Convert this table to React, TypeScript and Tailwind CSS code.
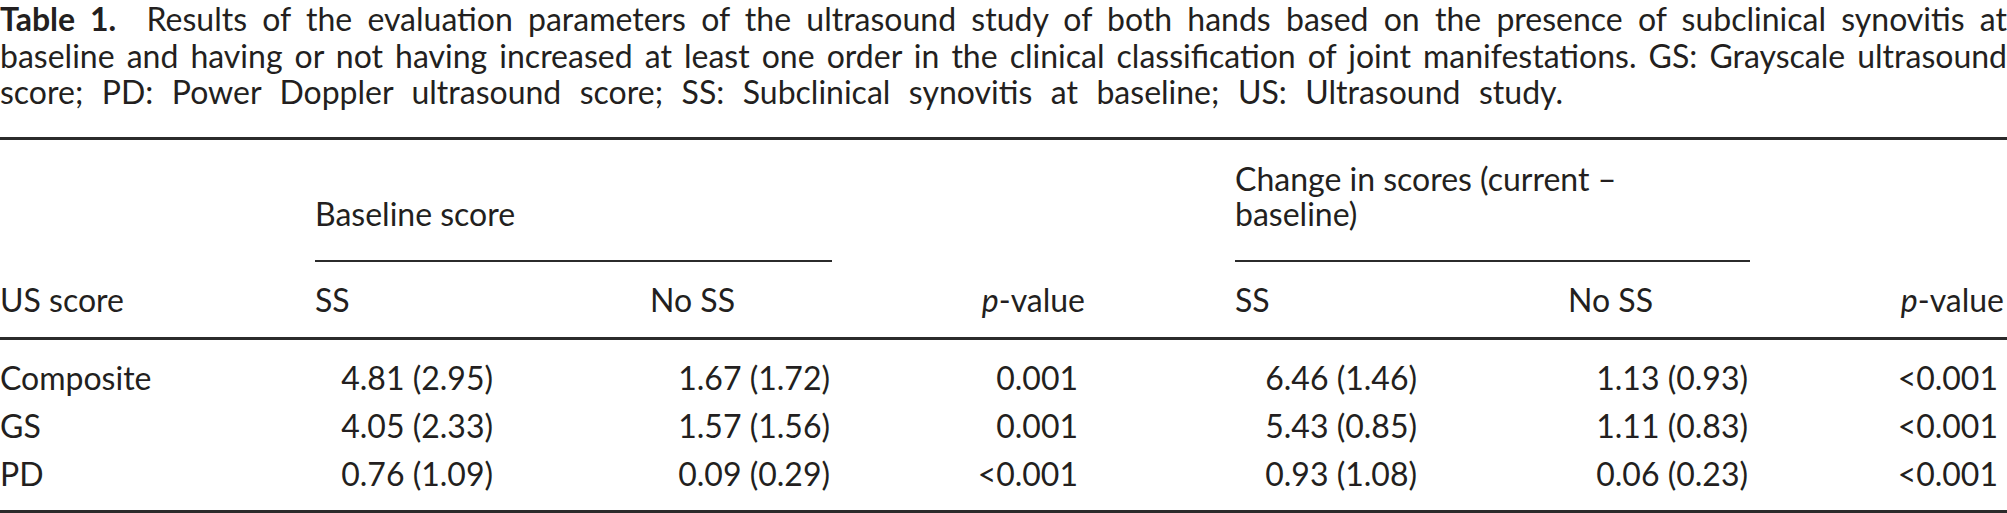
export default function App() {
  const rows = [
    ["Composite", "4.81 (2.95)", "1.67 (1.72)", "0.001", "6.46 (1.46)", "1.13 (0.93)", "<0.001"],
    ["GS", "4.05 (2.33)", "1.57 (1.56)", "0.001", "5.43 (0.85)", "1.11 (0.83)", "<0.001"],
    ["PD", "0.76 (1.09)", "0.09 (0.29)", "<0.001", "0.93 (1.08)", "0.06 (0.23)", "<0.001"],
  ];
  return (
    <div className="w-[2007px] h-[513px] overflow-hidden bg-white text-[#231f20] font-['Lato','Open_Sans',sans-serif] text-[32px]">
      <div className="pt-[1px] leading-[36.5px]">
        <div className="text-justify [text-align-last:justify]">
          <span className="font-bold">Table 1.</span>&nbsp; Results of the evaluation parameters of the ultrasound study of both hands based on the presence of subclinical synovitis at
        </div>
        <div className="text-justify [text-align-last:justify]">
          baseline and having or not having increased at least one order in the clinical classification of joint manifestations. GS: Grayscale ultrasound
        </div>
        <div className="w-[1563px] text-justify [text-align-last:justify]">
          score; PD: Power Doppler ultrasound score; SS: Subclinical synovitis at baseline; US: Ultrasound study.
        </div>
      </div>
      <div className="mt-[26.5px] h-[3px] bg-[#2b2b2b]" />

      <div className="flex items-end pt-[21px] leading-[35px]">
        <div className="w-[315px] shrink-0" />
        <div className="w-[517px] shrink-0">
          <div className="pb-[29px]">Baseline score</div>
          <div className="h-[2px] bg-[#2b2b2b]" />
        </div>
        <div className="w-[403px] shrink-0" />
        <div className="w-[515px] shrink-0">
          <div className="pb-[29px]">
            Change in scores (current –<br />
            baseline)
          </div>
          <div className="h-[2px] bg-[#2b2b2b]" />
        </div>
      </div>

      <div className="mt-[20px] flex leading-[35px]">
        <div className="w-[315px] shrink-0">US score</div>
        <div className="w-[335px] shrink-0">SS</div>
        <div className="w-[250px] shrink-0">No SS</div>
        <div className="w-[335px] shrink-0 pr-[150px] text-right">
          <span className="italic">p</span>-value
        </div>
        <div className="w-[333px] shrink-0">SS</div>
        <div className="w-[232px] shrink-0">No SS</div>
        <div className="w-[207px] shrink-0 pr-[3px] text-right">
          <span className="italic">p</span>-value
        </div>
      </div>
      <div className="mt-[20px] h-[3px] bg-[#2b2b2b]" />

      <div className="mt-[14px] leading-[48px]">
        {rows.map((r) => (
          <div key={r[0]} className="flex">
            <div className="w-[315px] shrink-0">{r[0]}</div>
            <div className="w-[335px] shrink-0 pr-[157px] text-right">{r[1]}</div>
            <div className="w-[250px] shrink-0 pr-[70px] text-right">{r[2]}</div>
            <div className="w-[335px] shrink-0 pr-[157px] text-right">{r[3]}</div>
            <div className="w-[333px] shrink-0 pr-[151px] text-right">{r[4]}</div>
            <div className="w-[232px] shrink-0 pr-[52px] text-right">{r[5]}</div>
            <div className="w-[207px] shrink-0 pr-[9px] text-right">{r[6]}</div>
          </div>
        ))}
      </div>
      <div className="mt-[12px] h-[3px] bg-[#2b2b2b]" />
    </div>
  );
}
